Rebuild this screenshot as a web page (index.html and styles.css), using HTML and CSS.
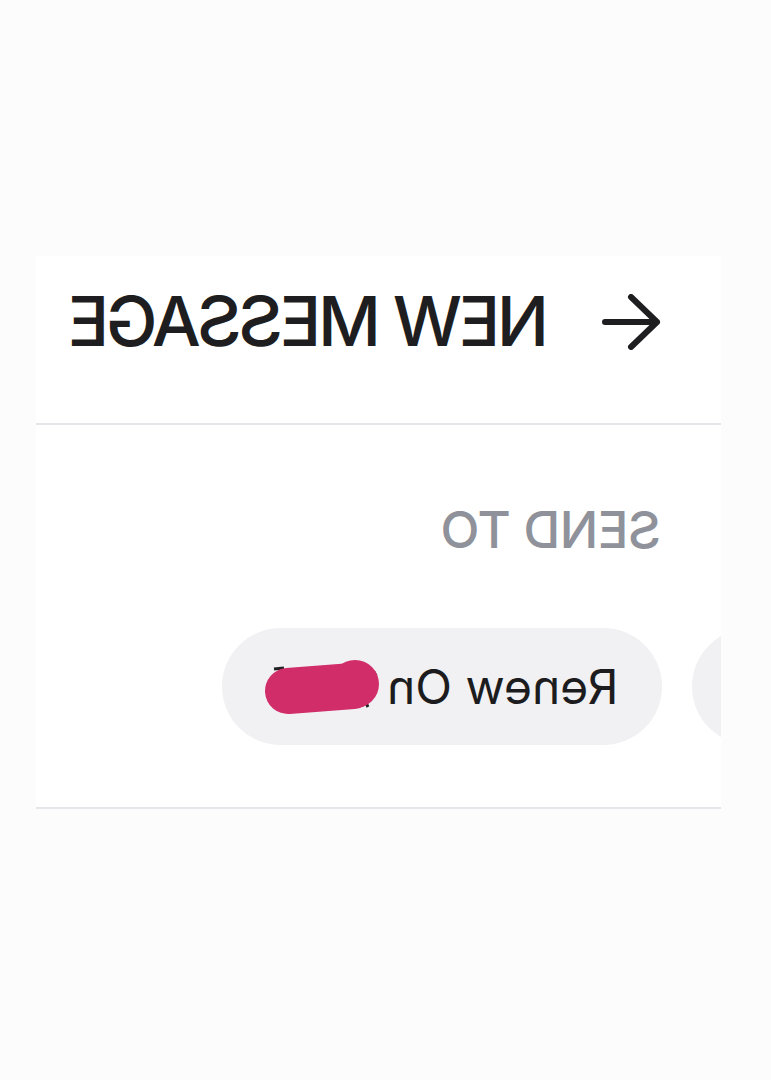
FILE: index.html
```html
<!DOCTYPE html>
<html lang="en">
<head>
    <meta charset="UTF-8">
    <meta name="viewport" content="width=device-width, initial-scale=1.0">
    <title>New Message</title>
    <link rel="stylesheet" href="styles.css">
</head>
<body>
    <div class="panel">
        <div class="header">
            <h1 class="title mirror">NEW MESSAGE</h1>
            <svg class="back" width="60" height="56" viewBox="0 0 60 56">
                <path d="M4 28 H56 M30 3 L56 28 L30 53" fill="none" stroke="#1e1e21" stroke-width="6" stroke-linecap="round" stroke-linejoin="round"/>
            </svg>
        </div>

        <div class="section">
            <div class="label-row">
                <span class="label mirror">SEND TO</span>
            </div>
            <div class="chips">
                <div class="chip">
                    <svg class="redact" width="116" height="62" viewBox="0 0 116 62">
                        <path d="M9 13 L19 12 M109 16 L111 20 M101 47 L103 51" stroke="#222" stroke-width="3" fill="none"/>
                        <path d="M23 35 L88 30" stroke="#d12d69" stroke-width="46" stroke-linecap="round" fill="none"/>
                        <circle cx="90" cy="28" r="24" fill="#d12d69"/>
                    </svg>
                    <span class="chip-text mirror">Renew On</span>
                </div>
                <div class="chip chip-next"></div>
            </div>
        </div>
    </div>
</body>
</html>
```

FILE: styles.css
```css
body {
    margin: 0;
    padding: 0;
    background-color: #fcfcfc;
    font-family: 'Inter', 'Liberation Sans', sans-serif;
    color: #1e1e21;
}
.mirror {
    display: inline-block;
    transform: scaleX(-1);
}
.panel {
    width: 685px;
    margin: 256px 0 0 36px;
    background: #fff;
    overflow: hidden;
}
.header {
    height: 131px;
    padding: 0 60px 36px 0;
    display: flex;
    justify-content: flex-end;
    align-items: center;
    gap: 52px;
    border-bottom: 2px solid #e5e5ea;
}
.title {
    margin: 0;
    font-size: 69px;
    font-weight: 500;
    line-height: 1;
    letter-spacing: -3.3px;
}
.back {
    display: block;
}
.section {
    padding: 79px 0 62px 0;
    border-bottom: 2px solid #e5e5ea;
}
.label-row {
    display: flex;
    justify-content: flex-end;
    padding-right: 60px;
}
.label {
    font-size: 51px;
    font-weight: 500;
    line-height: 1;
    letter-spacing: -0.5px;
    color: #8f929a;
}
.chips {
    display: flex;
    gap: 30px;
    margin-top: 73px;
    padding-left: 186px;
}
.chip {
    flex-shrink: 0;
    width: 440px;
    height: 117px;
    box-sizing: border-box;
    padding: 0 44px 0 43px;
    border-radius: 59px;
    background: #f1f1f3;
    display: flex;
    align-items: center;
    justify-content: space-between;
}
.chip-text {
    font-size: 48px;
    line-height: 1;
    color: #1c1c1e;
}
.redact {
    display: block;
}
.chip-next {
    width: 300px;
}
```
